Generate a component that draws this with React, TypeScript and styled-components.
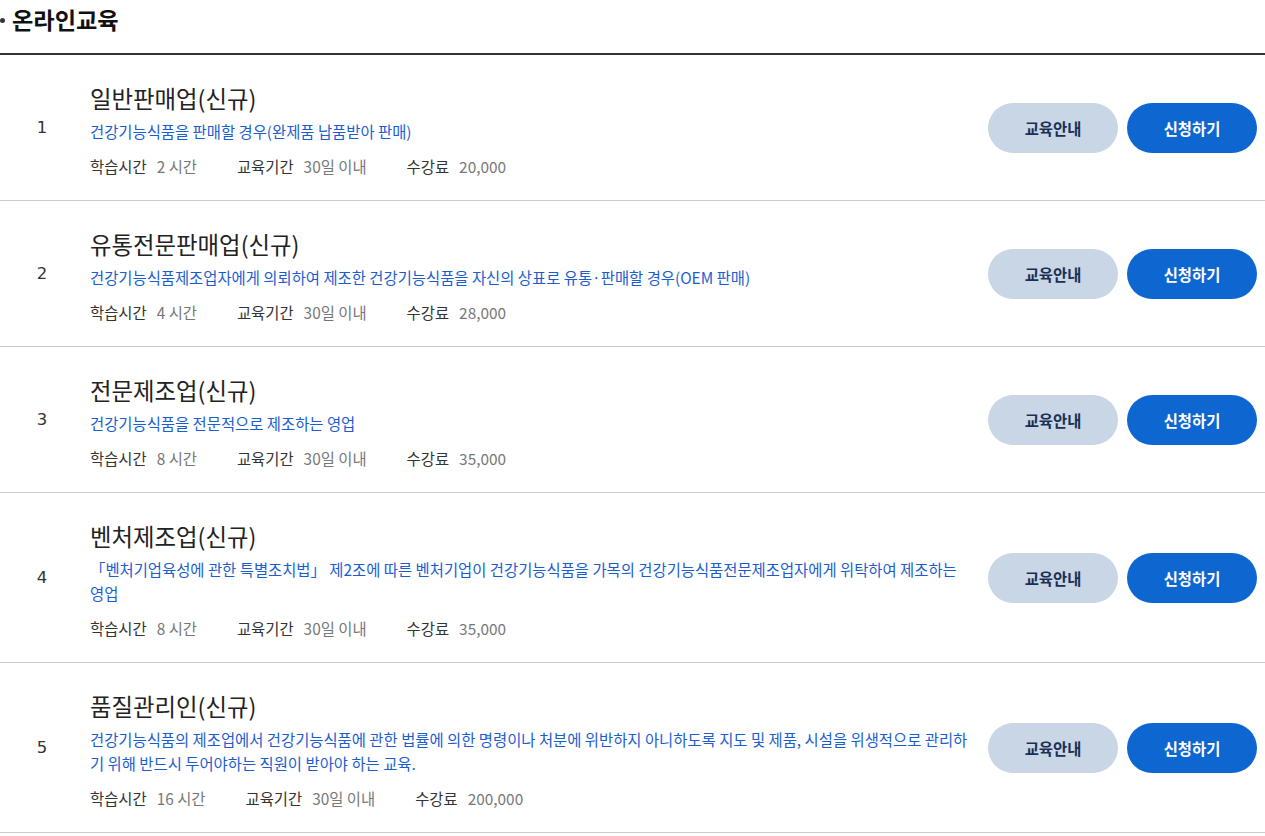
import React from "react";
import styled, { createGlobalStyle } from "styled-components";

const GlobalStyle = createGlobalStyle`
  html, body { margin: 0; padding: 0; background: #fff; }
  body { font-family: "Noto Sans CJK KR", "Noto Sans", sans-serif; color: #222; }
  * { box-sizing: border-box; }
`;

const Page = styled.div`
  width: 1265px;
`;

const Heading = styled.h2`
  display: flex;
  align-items: center;
  margin: 0;
  height: 55px;
  padding-bottom: 15px;
  border-bottom: 2px solid #333;
  font-size: 23.2px;
  font-weight: 700;
  line-height: 32px;
  color: #111;
  &::before {
    content: "";
    width: 5px;
    height: 5px;
    border-radius: 50%;
    background: #333;
    margin-right: 7px;
    margin-top: 3px;
  }
`;

const List = styled.ul`
  list-style: none;
  margin: 0;
  padding: 0;
`;

const Row = styled.li`
  display: flex;
  align-items: center;
  border-bottom: 1px solid #cccccc;
`;

const Num = styled.div`
  width: 84px;
  flex: none;
  text-align: center;
  font-family: "DejaVu Sans", sans-serif;
  font-size: 16.5px;
  color: #333;
`;

const Content = styled.div`
  flex: 1;
  min-width: 0;
  padding: 27px 17px 22px 6px;
`;

const Title = styled.h3`
  margin: 0;
  font-size: 23.4px;
  font-weight: 400;
  line-height: 33px;
  color: #222;
`;

const Desc = styled.p`
  margin: 4px 0 0;
  font-size: 15.4px;
  line-height: 24px;
  color: #1b5dcf;
`;

const Meta = styled.dl`
  display: flex;
  margin: 11px 0 0;
  font-size: 15.4px;
  line-height: 24px;
`;

const MetaLabel = styled.dt`
  color: #333;
  margin-right: 10px;
`;

const MetaValue = styled.dd`
  color: #777;
  margin: 0 40px 0 0;
`;

const Buttons = styled.div`
  display: flex;
  flex: none;
  gap: 9px;
  padding-right: 8px;
`;

const Pill = styled.button<{ $primary?: boolean }>`
  width: 130px;
  height: 50px;
  border: none;
  border-radius: 25px;
  font-family: "Noto Sans CJK KR", sans-serif;
  font-size: 15.4px;
  font-weight: 700;
  cursor: pointer;
  background: ${(p) => (p.$primary ? "#0e67d0" : "#c9d6e6")};
  color: ${(p) => (p.$primary ? "#ffffff" : "#1b2f55")};
`;

type Course = {
  title: string;
  desc: string;
  hours: string;
  period: string;
  fee: string;
};

const courses: Course[] = [
  {
    title: "일반판매업(신규)",
    desc: "건강기능식품을 판매할 경우(완제품 납품받아 판매)",
    hours: "2 시간",
    period: "30일 이내",
    fee: "20,000",
  },
  {
    title: "유통전문판매업(신규)",
    desc: "건강기능식품제조업자에게 의뢰하여 제조한 건강기능식품을 자신의 상표로 유통·판매할 경우(OEM 판매)",
    hours: "4 시간",
    period: "30일 이내",
    fee: "28,000",
  },
  {
    title: "전문제조업(신규)",
    desc: "건강기능식품을 전문적으로 제조하는 영업",
    hours: "8 시간",
    period: "30일 이내",
    fee: "35,000",
  },
  {
    title: "벤처제조업(신규)",
    desc: "「벤처기업육성에 관한 특별조치법」 제2조에 따른 벤처기업이 건강기능식품을 가목의 건강기능식품전문제조업자에게 위탁하여 제조하는 영업",
    hours: "8 시간",
    period: "30일 이내",
    fee: "35,000",
  },
  {
    title: "품질관리인(신규)",
    desc: "건강기능식품의 제조업에서 건강기능식품에 관한 법률에 의한 명령이나 처분에 위반하지 아니하도록 지도 및 제품, 시설을 위생적으로 관리하기 위해 반드시 두어야하는 직원이 받아야 하는 교육.",
    hours: "16 시간",
    period: "30일 이내",
    fee: "200,000",
  },
];

export default function App() {
  return (
    <Page>
      <GlobalStyle />
      <Heading>온라인교육</Heading>
      <List>
        {courses.map((c, i) => (
          <Row key={c.title}>
            <Num>{i + 1}</Num>
            <Content>
              <Title>{c.title}</Title>
              <Desc>{c.desc}</Desc>
              <Meta>
                <MetaLabel>학습시간</MetaLabel>
                <MetaValue>{c.hours}</MetaValue>
                <MetaLabel>교육기간</MetaLabel>
                <MetaValue>{c.period}</MetaValue>
                <MetaLabel>수강료</MetaLabel>
                <MetaValue>{c.fee}</MetaValue>
              </Meta>
            </Content>
            <Buttons>
              <Pill type="button">교육안내</Pill>
              <Pill type="button" $primary>
                신청하기
              </Pill>
            </Buttons>
          </Row>
        ))}
      </List>
    </Page>
  );
}
